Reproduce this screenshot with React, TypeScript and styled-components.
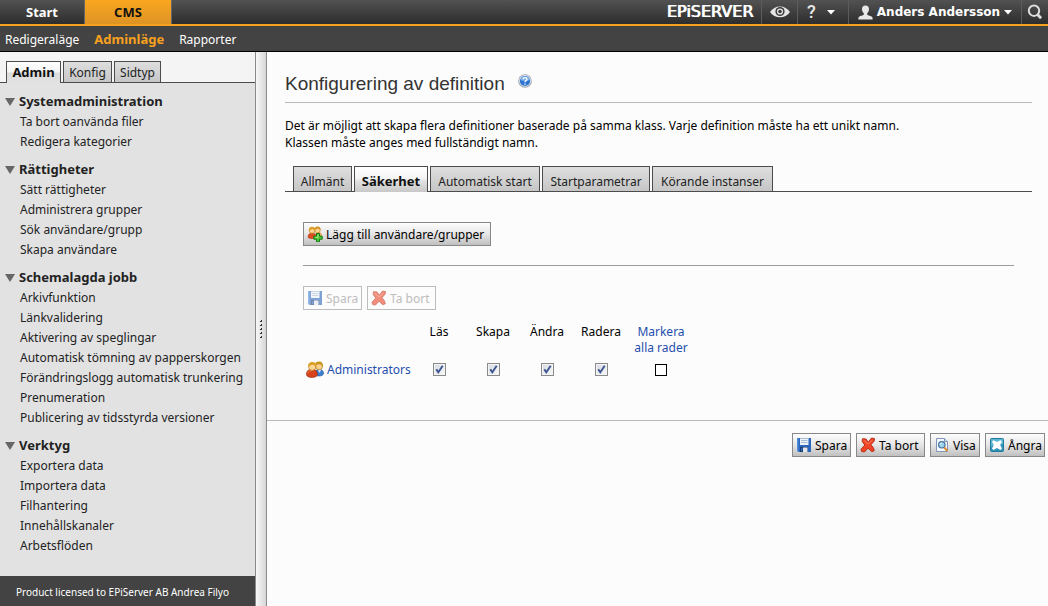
import React from "react";
import styled, { createGlobalStyle, css } from "styled-components";

const sans = `"Noto Sans", "Open Sans", sans-serif`;

const GlobalStyle = createGlobalStyle`
  *, *::before, *::after { box-sizing: border-box; }
  body { margin: 0; background: #fcfcfc; color: #000; font-family: ${sans}; font-size: 12px; line-height: 17px; }
  a { color: inherit; text-decoration: none; }
  button { font-family: inherit; font-size: inherit; cursor: pointer; }
`;

const Shell = styled.div`
  display: flex;
  flex-direction: column;
  min-height: 100vh;
`;

/* ---------- global navigation ---------- */

const TopBar = styled.header`
  display: flex;
  height: 26px;
  background: linear-gradient(#525252, #2d2d2d);
  border-bottom: 2px solid #f8a11f;
  color: #fff;
`;

const TopNav = styled.nav`
  display: flex;
  flex: 1;
`;

const TopTab = styled.a<{ $active?: boolean; $width: number }>`
  width: ${p => p.$width}px;
  border-right: 1px solid #666;
  text-align: center;
  font-weight: 700;
  font-size: 13px;
  line-height: 24px;
  ${p => p.$active && css`
    background: linear-gradient(#faa61f, #dd9425);
    color: #111;
  `}
`;

const Logo = styled.div`
  padding-right: 8px;
  font-family: "DejaVu Sans", sans-serif;
  font-size: 16px;
  line-height: 24px;
  text-shadow: 1px 0 #fff;
`;

const Tool = styled.button<{ $width: number }>`
  display: flex;
  align-items: center;
  justify-content: center;
  width: ${p => p.$width}px;
  height: 24px;
  padding: 0;
  border: 0;
  border-left: 1px solid #5c5c5c;
  background: none;
  color: #e8e8e8;
  white-space: nowrap;
`;

const ToolGroup = styled.div`
  display: flex;
`;

const HelpMark = styled.span`
  margin: 0 11px 0 -4px;
  font-family: Roboto, sans-serif;
  font-size: 18px;
  font-weight: 500;
  line-height: 24px;
`;

const UserName = styled.span`
  margin: 0 4px;
  color: #fff;
  font-family: "DejaVu Sans", sans-serif;
  font-size: 12px;
  font-weight: 700;
`;

const SubNav = styled.nav`
  display: flex;
  gap: 15px;
  height: 26px;
  padding: 0 5px;
  background: #434343;
  border-bottom: 1px solid #000;
  color: #fff;
  line-height: 27px;
`;

const SubLink = styled.a<{ $active?: boolean }>`
  ${p => p.$active && css`
    color: #f8a11f;
    font-weight: 700;
    font-size: 13px;
  `}
`;

/* ---------- frame ---------- */

const Frame = styled.div`
  display: flex;
  flex: 1;
`;

const Sidebar = styled.aside`
  display: flex;
  flex-direction: column;
  flex: 0 0 255px;
  background: #e2e2e2;
  color: #222;
`;

const Splitter = styled.div`
  display: flex;
  flex-direction: column;
  align-items: center;
  justify-content: center;
  flex: 0 0 12px;
  border: 1px solid #8a8a8a;
  border-width: 0 1px;
  background: linear-gradient(90deg, #f8f8f8, #d6d6d6);
`;

const Main = styled.main`
  flex: 1;
  min-width: 0;
  background: #fcfcfc;
`;

/* ---------- tabs ---------- */

const TabStrip = styled.div<{ $side?: boolean }>`
  display: flex;
  align-items: flex-end;
  gap: 2px;
  border-bottom: 1px solid #4c4c4c;
  ${p => p.$side
    ? css`height: 31px; padding-left: 6px; background: #f4f4f4;`
    : css`height: 26px; padding-left: 8px;`}
`;

const Tab = styled.button<{ $active?: boolean; $side?: boolean; $width: number }>`
  width: ${p => p.$width}px;
  height: ${p => (p.$side ? 21 : 25)}px;
  padding: ${p => (p.$side ? 1 : 4)}px 0 0;
  border: 1px solid #4c4c4c;
  border-bottom: 0;
  background: linear-gradient(#dedede, #c6c6c6);
  color: #222;
  line-height: 17px;
  white-space: nowrap;
  ${p => p.$active && css`
    height: ${p.$side ? 22 : 26}px;
    margin-bottom: -1px;
    padding-top: ${p.$side ? 0 : 3}px;
    background: ${p.$side
      ? "linear-gradient(#fff, #f4f4f4 45%, #dcdcdc 55%, #e2e2e2)"
      : "linear-gradient(#fff, #f4f4f4 45%, #e2e2e2 55%, #c8c8c8)"};
    color: #111;
    font-weight: 700;
    font-size: 13px;
  `}
`;

/* ---------- sidebar menu ---------- */

const Menu = styled.nav`
  flex: 1;
  padding: 8px 0 13px;
`;

const Group = styled.section`
  margin-bottom: 7px;
`;

const GroupTitle = styled.h2`
  display: flex;
  align-items: center;
  gap: 4px;
  margin: 0;
  padding-left: 5px;
  font-size: 13px;
  line-height: 20px;
`;

const Items = styled.ul`
  margin: 0;
  padding: 1px 0 0 20px;
  list-style: none;
  line-height: 20px;
`;

const License = styled.footer`
  height: 30px;
  padding-left: 16px;
  background: #434343;
  color: #fff;
  font-size: 10px;
  line-height: 33px;
`;

/* ---------- page content ---------- */

const Content = styled.div`
  padding: 19px 16px 42px 18px;
`;

const PageTitle = styled.h1`
  display: flex;
  gap: 13px;
  margin: 0 0 14px;
  padding-bottom: 5px;
  border-bottom: 1px solid #b9b9b9;
  color: #333;
  font-family: "Liberation Sans", Arial, sans-serif;
  font-size: 19px;
  font-weight: 400;
  line-height: 26px;
`;

const HelpLink = styled.a`
  display: block;
  width: 14px;
  height: 14px;
  margin-top: 3px;
  svg { display: block; }
`;

const Intro = styled.p`
  margin: 0 0 15px;
`;

const Panel = styled.div`
  padding: 30px 18px 0;
`;

const Rule = styled.hr`
  margin: 19px 0 20px;
  border: 0;
  border-top: 1px solid #999;
`;

const Buttons = styled.div<{ $end?: boolean }>`
  display: flex;
  gap: 5px;
  ${p => p.$end && css`
    justify-content: flex-end;
    padding: 12px 3px;
    border-top: 1px solid #b9b9b9;
  `}
`;

const ToolButton = styled.button<{ $width: number }>`
  display: flex;
  align-items: center;
  gap: 3px;
  width: ${p => p.$width}px;
  height: 24px;
  padding: 0 0 0 3px;
  border: 1px solid #888;
  background: linear-gradient(#fdfdfd, #e6e6e6 50%, #c0c0c0);
  color: #000;
  white-space: nowrap;
  svg { flex: none; }
  &:disabled {
    border-color: #bdbdbd;
    background: none;
    color: #bdbdbd;
    cursor: default;
  }
  &:disabled svg { opacity: 0.6; }
`;

const AccessTable = styled.table`
  margin-top: 12px;
  border-collapse: collapse;
  table-layout: fixed;
  width: 391px;
`;

const Col = styled.col<{ $width: number }>`
  width: ${p => p.$width}px;
`;

const HeadCell = styled.th`
  padding: 2px 0 0;
  font-weight: 400;
  line-height: 16px;
  vertical-align: top;
`;

const MarkAll = styled.a`
  display: block;
  padding: 0 4px;
  color: #1f4fae;
`;

const RoleCell = styled.th`
  padding: 5px 0 0 3px;
  text-align: left;
  font-weight: 400;
`;

const RoleLink = styled.a`
  display: flex;
  align-items: center;
  gap: 3px;
  color: #1f4fae;
`;

const BoxCell = styled.td`
  padding: 5px 0 0;
`;

const Check = styled.label`
  display: grid;
  place-items: center;
  svg { grid-area: 1 / 1; pointer-events: none; }
`;

const Box = styled.input<{ $plain?: boolean }>`
  grid-area: 1 / 1;
  appearance: none;
  width: ${p => (p.$plain ? 12 : 13)}px;
  height: ${p => (p.$plain ? 12 : 13)}px;
  margin: 0;
  border: 1px solid ${p => (p.$plain ? "#000" : "#8a8a8a")};
  background: ${p => (p.$plain ? "#fff" : "linear-gradient(135deg, #d4d8e0, #fafafa)")};
  ${p => !p.$plain && css`box-shadow: inset 0 0 0 1px #f4f4f4;`}
`;

/* ---------- drawings ---------- */

const Caret = () => (
  <svg width="8" height="5" viewBox="0 0 8 5"><path d="M0 0h8L4 4.5z" fill="#fff" /></svg>
);

const EyeIcon = () => (
  <svg width="20" height="14" viewBox="0 0 20 14">
    <path d="M0 7C4.500-.5 15.500-.5 20 7 15.500 14 4.500 14 0 7z" fill="#e6e6e6" />
    <circle cx="10" cy="6.500" r="4.600" fill="#3a3a3a" />
    <circle cx="10" cy="6.500" r="3.100" fill="#e6e6e6" />
    <circle cx="10" cy="6.500" r="1.800" fill="#3a3a3a" />
  </svg>
);

const PersonIcon = () => (
  <svg width="15" height="15" viewBox="0 0 15 15">
    <path d="M7.500.5c2.300 0 3.500 1.500 3.500 3.800 0 1.700-.8 3.200-1.800 4v1.500c1.200.9 3.300 1 4.600 1.900.7.500.9 1.500.9 2.800H.3c0-1.300.2-2.300.9-2.800 1.300-.9 3.400-1 4.600-1.900V8.300C4.800 7.500 4 6 4 4.300 4 2 5.200.5 7.500.5z" fill="#e8e8e8" />
  </svg>
);

const SearchIcon = () => (
  <svg width="16" height="16" viewBox="0 0 16 16" fill="none" stroke="#dedede">
    <circle cx="7" cy="6.700" r="5.200" strokeWidth="2" />
    <path d="M10.500 10.500l3.600 3.700" strokeWidth="2.800" />
  </svg>
);

const Arrow = () => (
  <svg width="10" height="10" viewBox="0 0 10 10"><path d="M0 2h10L5 10z" fill="#666" /></svg>
);

const Grip = () => (
  <svg width="3" height="18" viewBox="0 0 3 18" fill="#333">
    {[0, 4, 8, 12, 16].map(y => <path key={y} d={`M0 ${y + 1}h1v-1h1v2h-2z`} />)}
  </svg>
);

const HelpIcon = () => (
  <svg width="14" height="14" viewBox="0 0 14 14">
    <circle cx="7" cy="7" r="6.800" fill="#9aa3ae" />
    <circle cx="7" cy="6.800" r="5.900" fill="#e3ebf4" />
    <circle cx="7" cy="7" r="5.100" fill="#2d74cf" />
    <path d="M2.400 6C3 1 11 1 11.600 6 9 7.500 5 7.500 2.400 6z" fill="#79aeea" />
    <path d="M5.100 5.300c.1-2.300 3.800-2.200 3.800 0C8.900 6.700 7 6.700 7 8.200M7 9.400v1.400" fill="none" stroke="#fff" strokeWidth="1.400" />
  </svg>
);

const UsersIcon = () => (
  <svg width="18" height="17" viewBox="0 0 18 17">
    <path d="M9.500 14.500c-.5-4 .5-6 3.500-6s4.500 1.500 4.500 4c0 1.500-2 2.500-4.500 2.500z" fill="#3a7fd4" stroke="#1c4a8c" strokeWidth=".6" />
    <path d="M12 9l1.500 3L15 9z" fill="#dfeefb" />
    <circle cx="13" cy="5.300" r="3.600" fill="#f8cf8c" stroke="#a06a10" strokeWidth=".6" />
    <path d="M9 5c-.3-3 1.500-4.400 4-4.400S17.400 2 17 6.200C16 5 15 3.300 13.500 3.200 12 3.200 10 3.800 9 5z" fill="#c8941d" />
    <path d="M.5 13.500c0-3.700 2-5.200 5.500-5.200s5.500 1.500 5.400 5.200c0 1.800-2.400 3-5.400 3s-5.500-1.200-5.500-3z" fill="#d8431c" stroke="#8e260c" strokeWidth=".6" />
    <path d="M2 12.200c.5-2 2-2.700 4-2.700" fill="none" stroke="#f58a58" />
    <circle cx="6.200" cy="5.700" r="3.700" fill="#fbd595" stroke="#a06a10" strokeWidth=".6" />
    <path d="M2.200 6.200C1.800 2.500 3.600.9 6.300.9s4.500 1.800 4 5.500C9 5.200 8.200 3.800 6.700 3.700 5.200 3.900 3.300 4.700 2.200 6.200z" fill="#dca028" />
  </svg>
);

const AddUsersIcon = () => (
  <svg width="16" height="16" viewBox="0 0 16 16">
    <path d="M8 10c0-3 1.500-4 3.500-4S15 7 15 10z" fill="#e8a45c" />
    <circle cx="10.500" cy="4" r="2.800" fill="#fbd595" stroke="#b87516" strokeWidth=".6" />
    <path d="M7.500 4C7.500 1.500 9 .6 10.700.6s3 1 2.800 3.400l-2.500-1.500z" fill="#d39222" />
    <path d="M1 11.500C1 8.300 2.500 7 5 7s4.500 1.300 4.500 4.500c-1.500 1.500-7 1.500-8.500 0z" fill="#dc4a20" stroke="#a8330f" strokeWidth=".5" />
    <circle cx="5" cy="4.400" r="2.900" fill="#fbd595" stroke="#b87516" strokeWidth=".6" />
    <path d="M2 4.800C1.600 2 3.100.8 5.100.8s3.400 1.300 3 4L5.500 3z" fill="#dca028" />
    <path d="M9.500 7.500h3v2.700h2.700v3h-2.700v2.600h-3v-2.600H6.800v-3h2.700z" fill="#4cc536" stroke="#157a12" />
    <path d="M11 8.700v3M8.200 11.300h3" stroke="#a8ec8e" />
  </svg>
);

const SaveIcon = () => (
  <svg width="16" height="16" viewBox="0 0 16 16">
    <path d="M1 1h14v14H2.500L1 13.500z" fill="#2a66bd" />
    <path d="M1 1h1.500v14L1 13.500z" fill="#4f8ddd" />
    <path d="M4 1h8.500v7H4z" fill="#eef3f8" />
    <path d="M4 1.500h8.500M5 3.500h6.500M5 5.500h6.500" stroke="#a9bdd2" />
    <path d="M4 10h8v5H4z" fill="#1c3c6e" />
    <path d="M7 10.500h4.500V15H7z" fill="#e2e7ec" />
    <path d="M5 11h1.500v3H5z" fill="#2a66bd" />
  </svg>
);

const DeleteIcon = () => (
  <svg width="16" height="16" viewBox="0 0 16 16">
    <path d="M2.500 1.700L6 2l2.300 3.200L11.500 1l3 .6-.3 2.400L11 7.700l2.500 3.300.8 2.700-2.500 1L8 11.200 4.500 15l-2.800-.4-.7-2.300L4.800 8 2.200 4.500z" fill="#ee4526" stroke="#b32712" strokeWidth=".9" strokeLinejoin="round" />
    <path d="M3.500 3l4.500 4.200L12.500 3" fill="none" stroke="#ff7a5e" strokeWidth="1" />
  </svg>
);

const ViewIcon = () => (
  <svg width="16" height="16" viewBox="0 0 16 16">
    <path d="M2.500 1.500h8l3 3v10h-11z" fill="#f5f9fd" stroke="#8196b6" />
    <path d="M10.500 1.500v3h3" fill="#cfdcec" stroke="#8196b6" />
    <circle cx="7.800" cy="7.800" r="3.200" fill="#9bd2ec" stroke="#41729c" strokeWidth="1.200" />
    <path d="M6 7.500c.3-1 1-1.500 2-1.500" fill="none" stroke="#fff" />
    <path d="M10.300 10.500l3.200 3.700" stroke="#e08a2a" strokeWidth="2" />
  </svg>
);

const UndoIcon = () => (
  <svg width="16" height="16" viewBox="0 0 16 16">
    <rect x="1.500" y="1.500" width="13" height="13" rx="1" fill="#2e94b8" stroke="#237a9c" />
    <path d="M2 2h12v5C9 7 5 8 2 10z" fill="#5cb5d2" />
    <path d="M4.500 3.200L8 5l3.500-1.800 1.500 1.500L11.200 8l1.800 3.400-1.500 1.500L8 11l-3.500 1.900L3 11.400 4.800 8 3 4.700z" fill="#fff" />
  </svg>
);

const Tick = () => (
  <svg width="9" height="9" viewBox="0 0 9 9">
    <path d="M1.300 4.200l2 3L7.700.8" fill="none" stroke="#3d5590" strokeWidth="1.900" />
  </svg>
);

/* ---------- data ---------- */

const groups = [
  { title: "Systemadministration", items: ["Ta bort oanvända filer", "Redigera kategorier"] },
  { title: "Rättigheter", items: ["Sätt rättigheter", "Administrera grupper", "Sök användare/grupp", "Skapa användare"] },
  {
    title: "Schemalagda jobb",
    items: [
      "Arkivfunktion", "Länkvalidering", "Aktivering av speglingar", "Automatisk tömning av papperskorgen",
      "Förändringslogg automatisk trunkering", "Prenumeration", "Publicering av tidsstyrda versioner",
    ],
  },
  { title: "Verktyg", items: ["Exportera data", "Importera data", "Filhantering", "Innehållskanaler", "Arbetsflöden"] },
];

const sideTabs = [
  { label: "Admin", width: 55, active: true },
  { label: "Konfig", width: 49 },
  { label: "Sidtyp", width: 47 },
];

const pageTabs = [
  { label: "Allmänt", width: 59 },
  { label: "Säkerhet", width: 74, active: true },
  { label: "Automatisk start", width: 110 },
  { label: "Startparametrar", width: 108 },
  { label: "Körande instanser", width: 121 },
];

const rights = ["Läs", "Skapa", "Ändra", "Radera"];

export default function App() {
  return (
    <Shell>
      <GlobalStyle />
      <TopBar>
        <TopNav>
          <TopTab href="#start" $width={85}>Start</TopTab>
          <TopTab href="#cms" $width={87} $active>CMS</TopTab>
        </TopNav>
        <Logo>EPiSERVER</Logo>
        <ToolGroup>
          <Tool type="button" $width={36} aria-label="Visa webbplats"><EyeIcon /></Tool>
          <Tool type="button" $width={51} aria-label="Hjälp"><HelpMark>?</HelpMark><Caret /></Tool>
          <Tool type="button" $width={173}><PersonIcon /><UserName>Anders Andersson</UserName><Caret /></Tool>
          <Tool type="button" $width={27} aria-label="Sök"><SearchIcon /></Tool>
        </ToolGroup>
      </TopBar>
      <SubNav>
        <SubLink href="#edit">Redigeraläge</SubLink>
        <SubLink href="#admin" $active>Adminläge</SubLink>
        <SubLink href="#reports">Rapporter</SubLink>
      </SubNav>
      <Frame>
        <Sidebar>
          <TabStrip $side role="tablist">
            {sideTabs.map(t => (
              <Tab key={t.label} type="button" role="tab" aria-selected={!!t.active} $side $active={t.active} $width={t.width}>{t.label}</Tab>
            ))}
          </TabStrip>
          <Menu>
            {groups.map(g => (
              <Group key={g.title}>
                <GroupTitle><Arrow />{g.title}</GroupTitle>
                <Items>
                  {g.items.map(i => <li key={i}><a href="#item">{i}</a></li>)}
                </Items>
              </Group>
            ))}
          </Menu>
          <License>Product licensed to EPiServer AB Andrea Filyo</License>
        </Sidebar>
        <Splitter><Grip /></Splitter>
        <Main>
          <Content>
            <PageTitle>
              Konfigurering av definition
              <HelpLink href="#help" aria-label="Hjälp"><HelpIcon /></HelpLink>
            </PageTitle>
            <Intro>
              Det är möjligt att skapa flera definitioner baserade på samma klass. Varje definition måste ha ett unikt namn.
              <br />
              Klassen måste anges med fullständigt namn.
            </Intro>
            <TabStrip role="tablist">
              {pageTabs.map(t => (
                <Tab key={t.label} type="button" role="tab" aria-selected={!!t.active} $active={t.active} $width={t.width}>{t.label}</Tab>
              ))}
            </TabStrip>
            <Panel>
              <ToolButton type="button" $width={188}><AddUsersIcon />Lägg till användare/grupper</ToolButton>
              <Rule />
              <Buttons>
                <ToolButton type="button" $width={59} disabled><SaveIcon />Spara</ToolButton>
                <ToolButton type="button" $width={69} disabled><DeleteIcon />Ta bort</ToolButton>
              </Buttons>
              <AccessTable>
                <colgroup>
                  <Col $width={109} />
                  {rights.map(r => <Col key={r} $width={54} />)}
                  <Col $width={66} />
                </colgroup>
                <thead>
                  <tr>
                    <td />
                    {rights.map(r => <HeadCell key={r} scope="col">{r}</HeadCell>)}
                    <HeadCell scope="col"><MarkAll href="#all">Markera alla rader</MarkAll></HeadCell>
                  </tr>
                </thead>
                <tbody>
                  <tr>
                    <RoleCell scope="row"><RoleLink href="#role"><UsersIcon />Administrators</RoleLink></RoleCell>
                    {rights.map(r => (
                      <BoxCell key={r}>
                        <Check><Box type="checkbox" defaultChecked aria-label={r} /><Tick /></Check>
                      </BoxCell>
                    ))}
                    <BoxCell><Check><Box type="checkbox" $plain aria-label="Markera alla rader" /></Check></BoxCell>
                  </tr>
                </tbody>
              </AccessTable>
            </Panel>
          </Content>
          <Buttons $end>
            <ToolButton type="button" $width={59}><SaveIcon />Spara</ToolButton>
            <ToolButton type="button" $width={69}><DeleteIcon />Ta bort</ToolButton>
            <ToolButton type="button" $width={50}><ViewIcon />Visa</ToolButton>
            <ToolButton type="button" $width={60}><UndoIcon />Ångra</ToolButton>
          </Buttons>
        </Main>
      </Frame>
    </Shell>
  );
}
